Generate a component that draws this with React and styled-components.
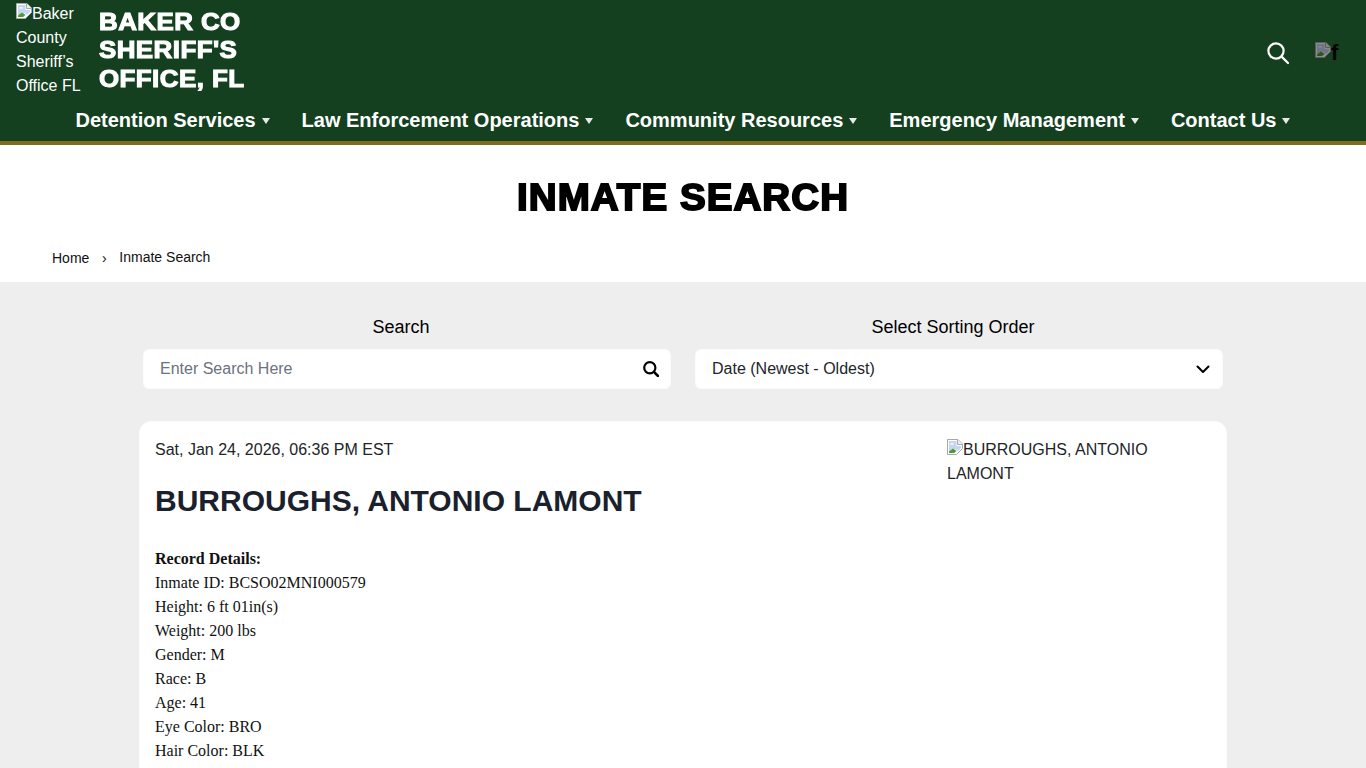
import React from "react";
import styled, { createGlobalStyle } from "styled-components";

const Global = createGlobalStyle`
  html, body { margin: 0; padding: 0; height: 768px; overflow: hidden; background: #eeeeee; }
  body { font-family: "Liberation Sans", Arial, sans-serif; font-size: 16px; line-height: 24px; color: #212529; }
  * { box-sizing: border-box; }
`;

const Header = styled.header`
  background: #154020;
  border-bottom: 4px solid #7f6b1e;
  height: 145px;
  padding: 1px 28px 0 16px;
`;
const TopRow = styled.div`
  display: flex;
  align-items: flex-start;
  height: 96px;
`;
const LogoAlt = styled.div`
  width: 70px;
  padding-top: 1px;
  color: #fff;
  margin-right: 13px;
`;
const SiteName = styled.div`
  width: 160px;
  padding-top: 7px;
  color: #fff;
  font-size: 24px;
  line-height: 28.4px;
  font-weight: 700;
  letter-spacing: 0.4px;
  -webkit-text-stroke: 1.1px #fff;
  transform: scaleX(1.08);
  transform-origin: left top;
`;
const Tools = styled.div`
  margin-left: auto;
  display: flex;
  align-items: center;
  gap: 25px;
  height: 100%;
  padding-top: 7px;
`;
const CartSlot = styled.div`
  width: 23px;
  height: 21px;
  display: flex;
  align-items: flex-start;
  color: #000;
  font-size: 22px;
  font-weight: 700;
  line-height: 21px;
`;
const Nav = styled.nav`
  display: flex;
  justify-content: center;
  gap: 32px;
  padding-left: 12px;
  margin-top: 8px;
`;
const NavItem = styled.a`
  display: flex;
  align-items: center;
  gap: 6px;
  color: #fff;
  font-size: 20px;
  line-height: 30px;
  font-weight: 700;
  &::after {
    content: "";
    width: 0;
    height: 0;
    margin-top: 2px;
    border-left: 4px solid transparent;
    border-right: 4px solid transparent;
    border-top: 6px solid #e8ece8;
  }
`;
const TitleBand = styled.section`
  background: #fff;
  height: 137px;
  padding-top: 30px;
`;
const PageTitle = styled.h1`
  margin: 0;
  text-align: center;
  color: #000;
  font-size: 36px;
  line-height: 46px;
  font-weight: 700;
  letter-spacing: 1px;
  -webkit-text-stroke: 1.8px #000;
  transform: scaleX(1.07);
`;
const Crumbs = styled.div`
  display: flex;
  align-items: center;
  margin-top: 26px;
  padding-left: 52px;
  font-size: 14px;
  line-height: 20px;
  color: #111;
`;
const CrumbHome = styled.span`
  position: relative;
  top: 1px;
`;
const CrumbSep = styled.span`
  width: 30px;
  text-align: center;
  position: relative;
  top: 1px;
`;
const Main = styled.main`
  width: 1088px;
  margin: 0 auto;
  padding-top: 33px;
`;
const Filters = styled.div`
  display: grid;
  grid-template-columns: 528px 528px;
  gap: 24px;
  padding: 0 4px;
`;
const Field = styled.div`
  display: flex;
  flex-direction: column;
`;
const FieldLabel = styled.label`
  margin-left: -12px;
  text-align: center;
  font-size: 18px;
  line-height: 24px;
  color: #000;
  margin-bottom: 10px;
`;
const Control = styled.div`
  height: 40px;
  background: #fff;
  border: 1px solid #fbfbfb;
  border-radius: 6px;
  padding: 0 11px 0 16px;
  display: flex;
  align-items: center;
  justify-content: space-between;
  color: #212529;
`;
const Placeholder = styled.span`
  color: #6b7280;
`;
const Card = styled.article`
  margin-top: 32px;
  background: #fff;
  border: 1px solid #fbfbfb;
  border-radius: 12px;
  padding: 16px 15px 15px;
  height: 500px;
  display: flex;
  justify-content: space-between;
`;
const Stamp = styled.div`
  color: #212529;
`;
const Name = styled.h2`
  margin: 21px 0 28px;
  font-size: 30px;
  line-height: 36px;
  font-weight: 700;
  color: #1a202c;
`;
const Details = styled.div`
  font-family: "Liberation Serif", "Times New Roman", serif;
  color: #111;
`;
const DetailHead = styled.div`
  font-weight: 700;
`;
const Photo = styled.div`
  width: 264px;
`;
const BrokenIcon = styled.svg`
  width: 16px;
  height: 16px;
  flex: none;
  vertical-align: baseline;
  filter: ${(p) => (p.$dim ? "brightness(0.55)" : "none")};
`;

const BrokenImg = ({ dim }) => (
  <BrokenIcon viewBox="0 0 16 16" $dim={dim}>
    <path d="M.5.5h10.5l4.5 4.5v4.5l-6 6H.5z" fill="#fff" stroke="#a8a8a8" />
    <path d="M10.5.5v5h5" fill="#eee" stroke="#a8a8a8" />
    <path d="M2 2h7.5v5H14v2l-3 3-3-2-6 3z" fill="#c5d6f2" />
    <path d="M2 14v-1.5l4-3 3.5 2.5-2.5 2z" fill="#4f9a35" />
    <path d="M3 5.5c1-2 3-2 4 0z" fill="#fff" />
  </BrokenIcon>
);

const Details2 = [
  "Inmate ID: BCSO02MNI000579",
  "Height: 6 ft 01in(s)",
  "Weight: 200 lbs",
  "Gender: M",
  "Race: B",
  "Age: 41",
  "Eye Color: BRO",
  "Hair Color: BLK",
];
const navItems = [
  "Detention Services",
  "Law Enforcement Operations",
  "Community Resources",
  "Emergency Management",
  "Contact Us",
];

export default function App() {
  return (
    <>
      <Global />
      <Header>
        <TopRow>
          <LogoAlt>
            <BrokenImg />Baker County Sheriff’s Office FL
          </LogoAlt>
          <SiteName>BAKER CO SHERIFF'S OFFICE, FL</SiteName>
          <Tools>
            <svg width="24" height="24" viewBox="0 0 24 24" fill="none" stroke="#fff" strokeWidth="2.2" strokeLinecap="round">
              <circle cx="10" cy="10" r="7.6" />
              <path d="M15.6 15.6 22 22" />
            </svg>
            <CartSlot>
              <BrokenImg dim />f
            </CartSlot>
          </Tools>
        </TopRow>
        <Nav>
          {navItems.map((n) => (
            <NavItem key={n}>{n}</NavItem>
          ))}
        </Nav>
      </Header>
      <TitleBand>
        <PageTitle>INMATE SEARCH</PageTitle>
        <Crumbs>
          <CrumbHome>Home</CrumbHome>
          <CrumbSep>›</CrumbSep>
          <span>Inmate Search</span>
        </Crumbs>
      </TitleBand>
      <Main>
        <Filters>
          <Field>
            <FieldLabel>Search</FieldLabel>
            <Control>
              <Placeholder>Enter Search Here</Placeholder>
              <svg width="16" height="16" viewBox="0 0 16 16" fill="none" stroke="#000" strokeLinecap="round">
                <circle cx="6.8" cy="6.8" r="5.6" strokeWidth="2.2" />
                <path d="M11.2 11.2 15 15" strokeWidth="2.6" />
              </svg>
            </Control>
          </Field>
          <Field>
            <FieldLabel>Select Sorting Order</FieldLabel>
            <Control>
              <span>Date (Newest - Oldest)</span>
              <svg width="16" height="16" viewBox="0 0 16 16" fill="none" stroke="#000" strokeWidth="2" strokeLinecap="round" strokeLinejoin="round">
                <path d="M2.5 5.5l5.5 5.5 5.5-5.5" />
              </svg>
            </Control>
          </Field>
        </Filters>
        <Card>
          <div>
            <Stamp>Sat, Jan 24, 2026, 06:36 PM EST</Stamp>
            <Name>BURROUGHS, ANTONIO LAMONT</Name>
            <Details>
              <DetailHead>Record Details:</DetailHead>
              {Details2.map((d) => (
                <div key={d}>{d}</div>
              ))}
            </Details>
          </div>
          <Photo>
            <BrokenImg />BURROUGHS, ANTONIO LAMONT
          </Photo>
        </Card>
      </Main>
    </>
  );
}
